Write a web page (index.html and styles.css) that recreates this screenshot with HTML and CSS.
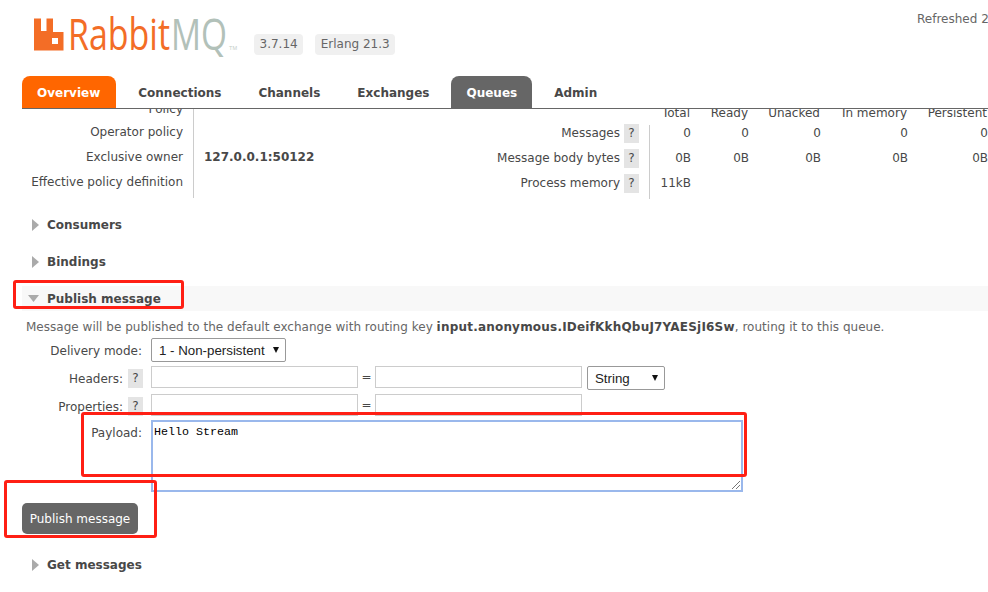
FILE: index.html
```html
<!DOCTYPE html>
<html lang="en">
<head>
<meta charset="utf-8">
<title>RabbitMQ Management</title>
<link rel="stylesheet" href="styles.css">
</head>
<body>
<div class="page">
  <header class="header">
    <svg class="logo" width="210" height="44" viewBox="0 0 210 44" aria-label="RabbitMQ">
      <path class="logo-mark" d="M0 0.500H7V13H12.500V0.500H19V14H29.500V32.500H0ZM18 20V26H24V20Z" fill-rule="evenodd"/>
      <text class="logo-rabbit" x="34" y="32" textLength="102" lengthAdjust="spacingAndGlyphs">Rabbit</text>
      <text class="logo-mq" x="137" y="32" textLength="56" lengthAdjust="spacingAndGlyphs">MQ</text>
      <text class="logo-tm" x="195" y="32" textLength="8" lengthAdjust="spacingAndGlyphs">TM</text>
    </svg>
    <div class="versions">
      <span class="version">3.7.14</span>
      <span class="version">Erlang 21.3</span>
    </div>
    <div class="refresh">Refreshed 2</div>
  </header>
  <nav class="tabs">
    <a class="tab tab-active">Overview</a>
    <a class="tab">Connections</a>
    <a class="tab">Channels</a>
    <a class="tab">Exchanges</a>
    <a class="tab tab-current">Queues</a>
    <a class="tab">Admin</a>
  </nav>
  <main class="content">
    <div class="scrolled">
      <section class="details">
        <div class="facts">
          <div class="fact"><span class="fact-key">Policy</span><span class="fact-val"></span></div>
          <div class="fact"><span class="fact-key">Operator policy</span><span class="fact-val"></span></div>
          <div class="fact"><span class="fact-key">Exclusive owner</span><span class="fact-val fact-strong">127.0.0.1:50122</span></div>
          <div class="fact"><span class="fact-key">Effective policy definition</span><span class="fact-val"></span></div>
        </div>
        <div class="stats">
          <div class="stat-row stat-head">
            <span class="stat-label"></span>
            <div class="stat-cells"><span class="c1">Total</span><span class="c2">Ready</span><span class="c3">Unacked</span><span class="c4">In memory</span><span class="c5">Persistent</span></div>
          </div>
          <div class="stat-row">
            <span class="stat-label">Messages <span class="help">?</span></span>
            <div class="stat-cells"><span class="c1">0</span><span class="c2">0</span><span class="c3">0</span><span class="c4">0</span><span class="c5">0</span></div>
          </div>
          <div class="stat-row">
            <span class="stat-label">Message body bytes <span class="help">?</span></span>
            <div class="stat-cells"><span class="c1">0B</span><span class="c2">0B</span><span class="c3">0B</span><span class="c4">0B</span><span class="c5">0B</span></div>
          </div>
          <div class="stat-row">
            <span class="stat-label">Process memory <span class="help">?</span></span>
            <div class="stat-cells"><span class="c1">11kB</span></div>
          </div>
        </div>
      </section>

      <h2 class="section-title"><svg class="arrow" width="7" height="12" viewBox="0 0 7 12"><path d="M0 0L7 6L0 12Z"/></svg>Consumers</h2>
      <h2 class="section-title"><svg class="arrow" width="7" height="12" viewBox="0 0 7 12"><path d="M0 0L7 6L0 12Z"/></svg>Bindings</h2>
      <h2 class="section-title section-open"><svg class="arrow arrow-down" width="11" height="7" viewBox="0 0 11 7"><path d="M0 0H11L5.500 7Z"/></svg>Publish message</h2>

      <p class="intro">Message will be published to the default exchange with routing key <b>input.anonymous.IDeifKkhQbuJ7YAESjI6Sw</b>, routing it to this queue.</p>

      <form class="publish">
        <div class="form-row">
          <label class="form-label form-label-plain">Delivery mode:</label>
          <div class="fake-select fake-select-mode">1 - Non-persistent<span class="caret"></span></div>
        </div>
        <div class="form-row">
          <label class="form-label">Headers: <span class="help">?</span></label>
          <span class="input"></span><span class="eq">=</span><span class="input"></span>
          <div class="fake-select fake-select-type">String<span class="caret"></span></div>
        </div>
        <div class="form-row form-row-props">
          <label class="form-label">Properties: <span class="help">?</span></label>
          <span class="input"></span><span class="eq">=</span><span class="input"></span>
        </div>
        <div class="form-row form-row-payload">
          <label class="form-label form-label-plain">Payload:</label>
          <div class="payload">Hello Stream
            <svg class="grip" width="10" height="10" viewBox="0 0 10 10"><path d="M1 9L9 1M5 9L9 5" /></svg>
          </div>
        </div>
        <button class="publish-btn" type="button">Publish message</button>
      </form>

      <h2 class="section-title section-last"><svg class="arrow" width="7" height="12" viewBox="0 0 7 12"><path d="M0 0L7 6L0 12Z"/></svg>Get messages</h2>
    </div>
    <div class="mark mark-title"></div>
    <div class="mark mark-payload"></div>
    <div class="mark mark-btn"></div>
  </main>
</div>
</body>
</html>
```
FILE: styles.css
```css
* { box-sizing: border-box; }
html, body { margin: 0; padding: 0; }
body {
  width: 988px;
  height: 592px;
  overflow: hidden;
  background: #fff;
  color: #484848;
  font-family: "DejaVu Sans", Verdana, sans-serif;
  font-size: 12px;
  line-height: 15px;
}
.page { display: flex; flex-direction: column; height: 592px; }

.header { position: relative; height: 76px; padding: 18px 0 0 34px; display: flex; flex: none; }
.logo { display: block; overflow: visible; flex: none; }
.logo-mark { fill: #f36d26; }
.logo-rabbit { fill: #f36d26; font-family: "Open Sans", sans-serif; font-weight: 400; font-size: 44px; }
.logo-mq { fill: #b2c1b9; font-family: "Open Sans", sans-serif; font-weight: 400; font-size: 44px; }
.logo-tm { fill: #c5cec9; font-family: "Liberation Sans", sans-serif; font-size: 6px; }
.versions { display: flex; gap: 12px; margin: 16px 0 0 10px; align-items: flex-start; }
.version { background: #f0f0f0; color: #666; border-radius: 4px; padding: 3px 5.500px; height: 21px; }
.refresh { position: absolute; left: 917px; top: 12px; white-space: nowrap; color: #666; }

.tabs { display: flex; flex: none; height: 33px; margin-left: 22px; border-bottom: 1px solid #666; font-weight: bold; font-size: 12px; }
.tab { display: block; height: 32px; padding: 10px 15px 0; border-radius: 8px 8px 0 0; color: #484848; margin-right: 7px; }
.tab-active { background: #f60; color: #fff; padding-right: 16px; }
.tab-current { background: #666; color: #fff; }

.content { position: relative; flex: 1; overflow: hidden; }
.scrolled { margin-top: -11px; }

.details { display: flex; height: 102px; }
.facts { width: 530px; flex: none; }
.fact { display: flex; height: 25px; align-items: center; }
.fact-key { width: 194px; flex: none; padding-right: 10px; text-align: right; height: 25px; line-height: 25px; border-right: 1px solid #ccc; color: #484848; }
.fact-val { padding-left: 10px; }
.fact-strong { font-weight: bold; }
.fact:first-child { height: 22px; }
.fact:first-child .fact-key { height: 22px; line-height: 22px; }
.fact:last-child { height: 28px; align-items: flex-start; }
.fact:last-child .fact-key { height: 28px; }

.stats { flex: 1; }
.stat-row { display: flex; height: 25px; align-items: flex-start; }
.stat-head { height: 23px; align-items: flex-end; }
.stat-label { width: 119px; flex: none; text-align: right; display: flex; justify-content: flex-end; align-items: center; gap: 4px; height: 25px; padding-right: 10px; white-space: nowrap; }
.stat-cells { height: 25px; width: 338px; flex: none; border-left: 1px solid #ccc; display: flex; align-items: center; }
.stat-head .stat-cells { border-left: 0; height: 15px; }
.stat-head + .stat-row .stat-cells { margin-top: 4px; height: 21px; padding-bottom: 4px; }
.stat-row:last-child { height: 28px; }
.stat-row:last-child .stat-cells { height: 28px; padding-bottom: 3px; }
.stat-cells span { white-space: nowrap; text-align: right; display: block; flex: none; }
.c1 { width: 41px; }
.c2 { width: 58px; }
.c3 { width: 72px; }
.c4 { width: 87px; }
.c5 { width: 80px; }

.help { display: inline-block; width: 15px; height: 19px; line-height: 19px; background: #e4e4e4; text-align: center; flex: none; }

.section-title { display: flex; align-items: center; margin: 13px 0 0; height: 24px; font-size: 12px; font-weight: bold; padding-left: 32px; color: #484848; line-height: 24px; }
.arrow { fill: #aaa; margin-right: 8px; flex: none; }
.section-open { height: 25px; margin-top: 12px; margin-left: 22px; background: #f8f8f8; padding-left: 6px; }
.section-last { margin-top: 19px; }

.intro { margin: 9px 0 0 26px; color: #666; white-space: nowrap; letter-spacing: .02px; }
.intro b { color: #484848; letter-spacing: .2px; }

.publish { margin-top: 3px; }
.form-row { display: flex; align-items: flex-start; height: 28px; }
.form-row-props { height: 26px; }
.form-label { width: 143px; flex: none; display: flex; justify-content: flex-end; gap: 5px; padding-top: 6px; margin-right: 8px; white-space: nowrap; }
.form-label .help { margin-top: -3px; }
.form-label-plain { padding-right: 1px; }
.input { width: 207px; height: 22px; border: 1px solid #ccc; background: #fff; flex: none; }
.eq { width: 17px; text-align: center; padding-top: 4px; }
.fake-select { position: relative; height: 24px; border: 1px solid #999; border-radius: 2px; padding: 3px 0 0 7px; color: #222; font-family: "Liberation Sans", sans-serif; font-size: 13.3px; line-height: 17px; background: #fff; flex: none; }
.fake-select-mode { width: 135px; }
.fake-select-type { width: 78px; margin-left: 5px; }
.caret { position: absolute; right: 6px; top: 8px; width: 0; height: 0; border-left: 3.500px solid transparent; border-right: 3.500px solid transparent; border-top: 6px solid #111; }
.form-row-payload { height: 73px; }
.payload { position: relative; width: 592px; height: 72px; border: 2px solid #9ab8ec; padding: 3px 1px; font-family: "Liberation Mono", monospace; font-size: 11.67px; line-height: 14px; color: #000; }
.grip { position: absolute; right: 0; bottom: 0; stroke: #777; fill: none; stroke-width: 1; }
.publish-btn { display: block; margin: 10px 0 0 22px; width: 116px; height: 31px; background: #666; color: #fff; border: 0; border-radius: 5px; font: 12px/15px "DejaVu Sans", sans-serif; padding: 1px 0 0; }

.mark { position: absolute; border: 3px solid #ff1f14; border-radius: 3px; pointer-events: none; }
.mark-title { left: 13px; top: 171px; width: 171px; height: 29px; }
.mark-payload { left: 81px; top: 303px; width: 666px; height: 65px; }
.mark-btn { left: 4px; top: 371px; width: 153px; height: 58px; }
```
